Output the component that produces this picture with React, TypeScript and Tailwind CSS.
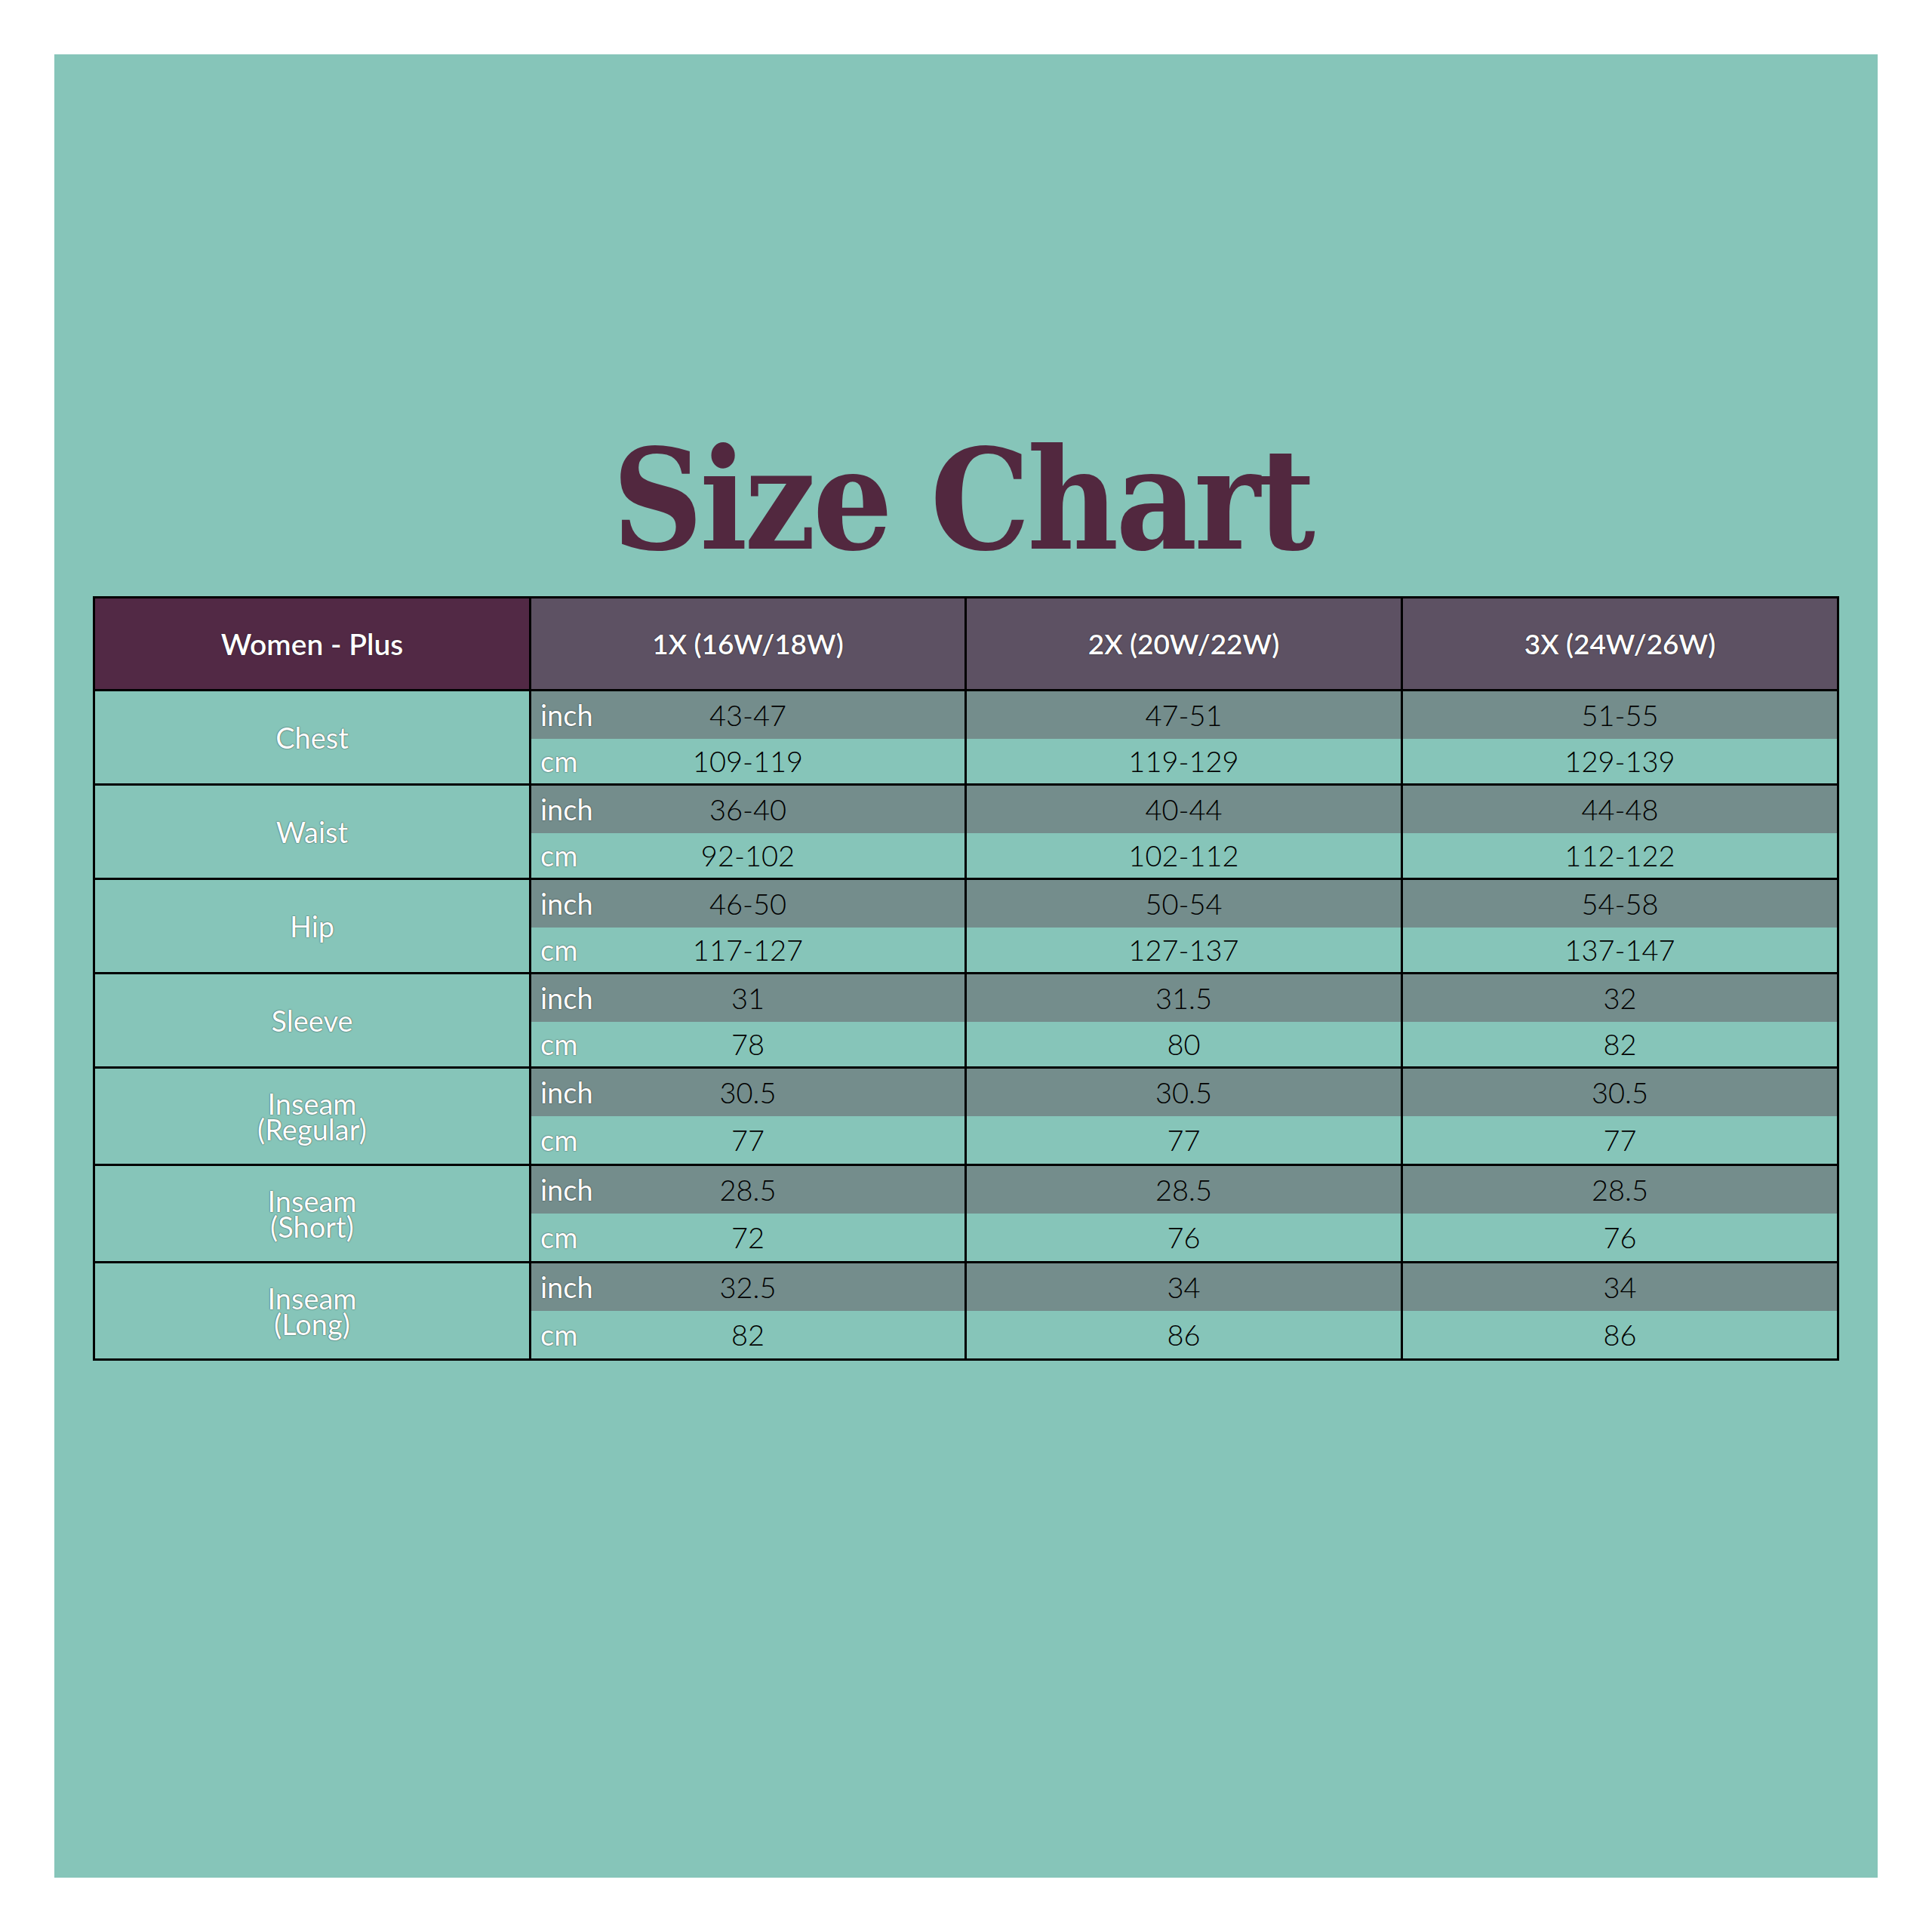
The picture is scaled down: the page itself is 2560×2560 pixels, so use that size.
import React from "react";

type Group = { label: string[]; inch: string[]; cm: string[]; tall?: boolean };

const groups: Group[] = [
  { label: ["Chest"], inch: ["43-47", "47-51", "51-55"], cm: ["109-119", "119-129", "129-139"] },
  { label: ["Waist"], inch: ["36-40", "40-44", "44-48"], cm: ["92-102", "102-112", "112-122"] },
  { label: ["Hip"], inch: ["46-50", "50-54", "54-58"], cm: ["117-127", "127-137", "137-147"] },
  { label: ["Sleeve"], inch: ["31", "31.5", "32"], cm: ["78", "80", "82"] },
  { label: ["Inseam", "(Regular)"], inch: ["30.5", "30.5", "30.5"], cm: ["77", "77", "77"], tall: true },
  { label: ["Inseam", "(Short)"], inch: ["28.5", "28.5", "28.5"], cm: ["72", "76", "76"], tall: true },
  { label: ["Inseam", "(Long)"], inch: ["32.5", "34", "34"], cm: ["82", "86", "86"], tall: true },
];

const sizes = ["1X (16W/18W)", "2X (20W/22W)", "3X (24W/26W)"];

const whiteText = "[text-shadow:0_0_1.5px_rgba(0,0,0,0.9)]";

export default function App() {
  return (
    <div className="w-[2560px] h-[2560px] bg-white p-[72px]">
      <div className="w-[2416px] h-[2416px] bg-[#86c5b9] flex flex-col items-center pt-[470px]">
        <div
          className="h-[240px] leading-[240px] pr-[10px] text-[#52283f] font-bold text-[185px] tracking-[-4px]"
          style={{ fontFamily: '"DejaVu Serif Condensed", "DejaVu Serif", serif', fontStretch: "condensed" }}
        >
          Size Chart
        </div>
        <div
          className="mt-[8px] grid grid-cols-[575px_574px_575px_575px] gap-[3px] p-[3px] bg-black"
          style={{ fontFamily: 'Lato, "Open Sans", sans-serif' }}
        >
          <div className={`h-[120px] bg-[#522945] flex items-center justify-center text-white text-[39px] font-semibold ${whiteText}`}>
            Women - Plus
          </div>
          {sizes.map((s) => (
            <div key={s} className={`h-[120px] bg-[#5d5163] flex items-center justify-center text-white text-[37px] font-semibold ${whiteText}`}>
              {s}
            </div>
          ))}
          {groups.map((g, gi) => (
            <React.Fragment key={gi}>
              <div
                className={`${g.tall ? "h-[126px]" : "h-[122px]"} bg-[#86c5b9] flex flex-col items-center justify-center text-white text-[38px] font-normal ${whiteText}`}
              >
                {g.label.map((l) => (
                  <div key={l} className="h-[34px] leading-[34px]">
                    {l}
                  </div>
                ))}
              </div>
              {[0, 1, 2].map((ci) => (
                <div key={ci} className={`${g.tall ? "h-[126px]" : "h-[122px]"} flex flex-col`}>
                  <div className="relative h-[63px] bg-[#748d8c] flex items-center justify-center text-black text-[38px] font-light">
                    {ci === 0 && (
                      <span className={`absolute left-[12px] text-white font-normal ${whiteText}`}>inch</span>
                    )}
                    <span>{g.inch[ci]}</span>
                  </div>
                  <div className="relative flex-1 bg-[#86c5b9] flex items-center justify-center text-black text-[38px] font-light">
                    {ci === 0 && (
                      <span className={`absolute left-[12px] text-white font-normal ${whiteText}`}>cm</span>
                    )}
                    <span>{g.cm[ci]}</span>
                  </div>
                </div>
              ))}
            </React.Fragment>
          ))}
        </div>
      </div>
    </div>
  );
}
